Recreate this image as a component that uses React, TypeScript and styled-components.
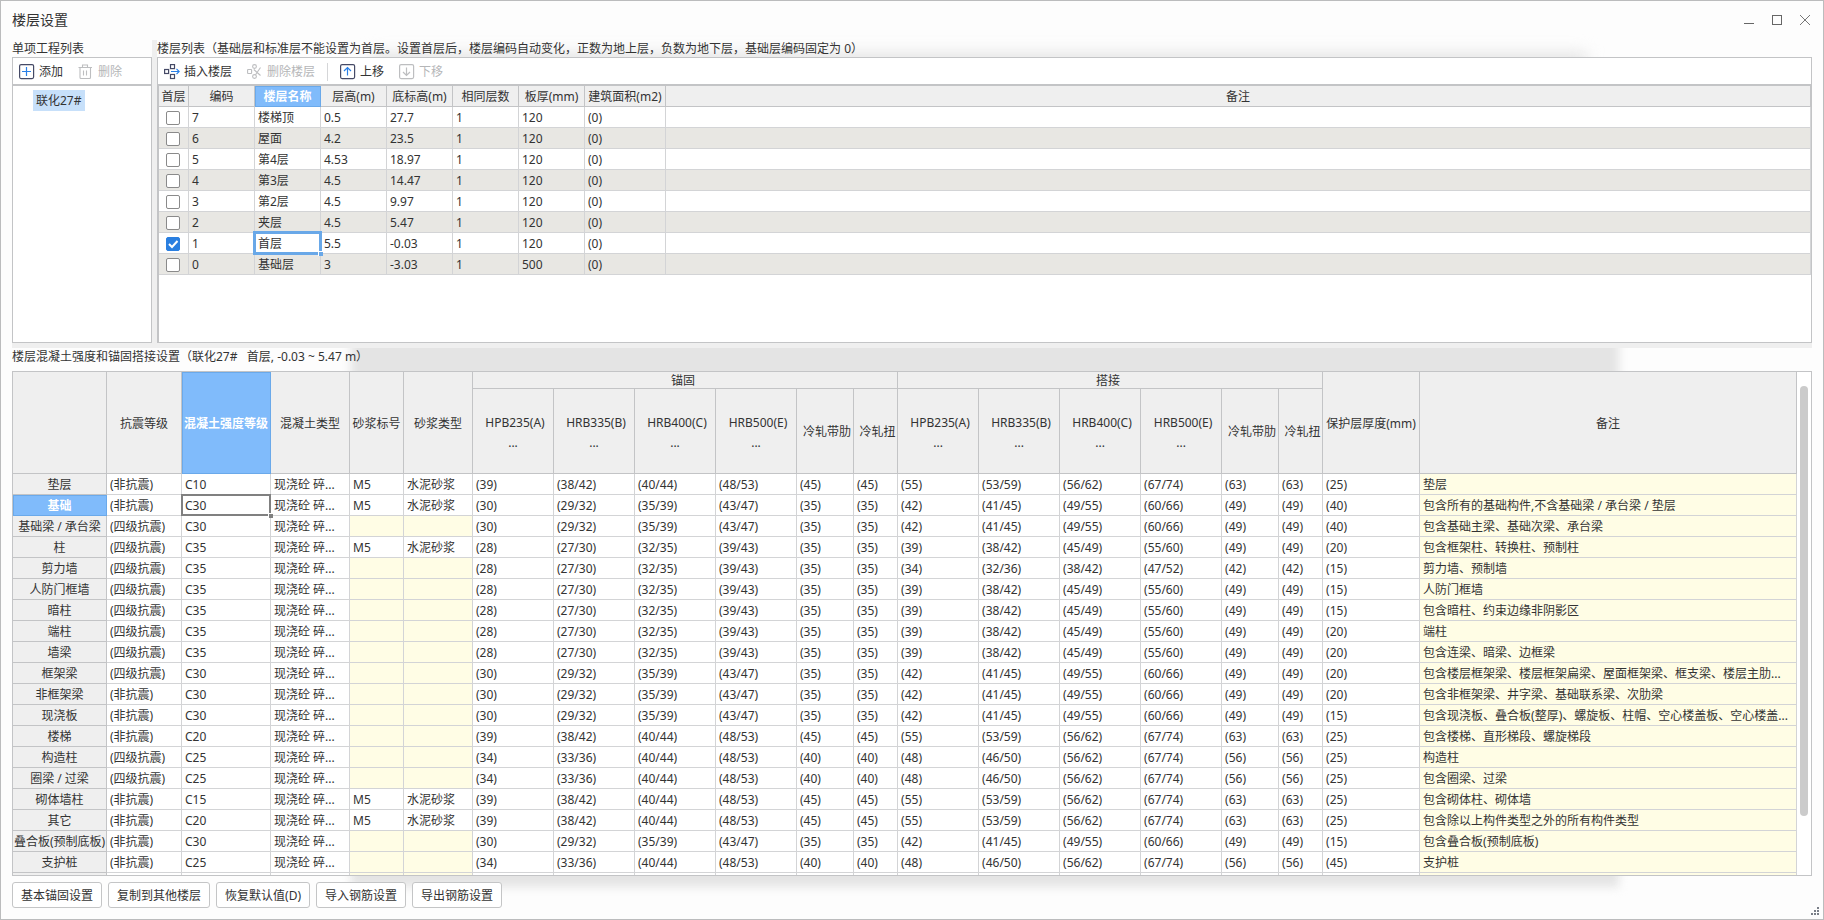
import React from "react";
import styled, { createGlobalStyle, css } from "styled-components";

const LINE = "#c3c4c6";
const GRID = "#d3d4d6";
const HEAD = "#efefef";
const BLUE = "#80bbfb";
const BLUE_EDGE = "#6aa9ea";

const Global = createGlobalStyle`
  *, *::before, *::after { box-sizing: border-box; }
  body {
    margin: 0;
    color: #333;
    background: #fdfdfd;
    font: 12px/20px "Noto Sans", "Noto Sans CJK SC", sans-serif;
  }
  button { font: inherit; color: inherit; cursor: pointer; }
`;

const Dialog = styled.main`
  position: relative;
  display: flex;
  flex-direction: column;
  height: 100vh;
  padding: 0 11px;
  border: 1px solid #bbbcbd;
  overflow: hidden;
  isolation: isolate;
`;

const Shade = styled.div<{ $top?: boolean }>`
  position: absolute;
  z-index: -1;
  inset: ${(p) => (p.$top ? "52px 236px 50% 370px" : "90px 204px 32px 350px")};
  background: #e4e4e4;
  filter: blur(${(p) => (p.$top ? 8 : 5)}px);
`;

const TitleBar = styled.header`
  display: flex;
  flex: none;
  align-items: center;
  justify-content: space-between;
  height: 39px;
  padding-bottom: 2px;
`;

const Title = styled.h1`
  margin: 0;
  font-size: 14px;
  font-weight: 400;
`;

const WindowControls = styled.div`
  display: flex;
  gap: 12px;
  margin-right: -1px;
`;

const WindowButton = styled.button`
  display: flex;
  padding: 0;
  border: 0;
  background: none;
`;

const Upper = styled.div`
  display: flex;
  flex: 303 1 0;
  min-height: 0;
`;

const Pane = styled.section<{ $narrow?: boolean }>`
  display: flex;
  flex-direction: column;
  ${(p) => (p.$narrow ? "flex: 0 0 140px;" : "flex: 1; min-width: 0;")}
`;

const Caption = styled.h2<{ $tall?: boolean }>`
  flex: none;
  height: ${(p) => (p.$tall ? 23 : 17)}px;
  margin: 0;
  font-size: 12px;
  font-weight: 400;
  line-height: 18px;
  white-space: pre;
`;

const VSplit = styled.div`
  flex: 0 0 5px;
  background: ${HEAD};
`;

const HSplit = styled.div`
  flex: 0 0 5px;
  background: ${HEAD};
`;

const Panel = styled.div`
  display: flex;
  flex: 1;
  flex-direction: column;
  min-height: 0;
  border: 1px solid ${LINE};
  background: #fff;
`;

const Toolbar = styled.div`
  display: flex;
  flex: none;
  align-items: center;
  gap: 15px;
  height: 27px;
  padding: 1px 6px 0;
  border-bottom: 1px solid ${LINE};
`;

const ToolButton = styled.button`
  display: flex;
  align-items: center;
  gap: 4px;
  padding: 0;
  border: 0;
  background: none;
  white-space: nowrap;
  &:disabled { color: #b5b6b8; cursor: default; }
  svg { flex: none; }
`;

const Divider = styled.span`
  width: 1px;
  height: 18px;
  margin: 0 -3px;
  background: #d5d6d8;
`;

const Tree = styled.ul`
  flex: 1;
  margin: 0;
  padding: 4px 20px;
  border-top: 1px solid ${LINE};
  list-style: none;
`;

const TreeItem = styled.li`
  width: max-content;
  padding: 1px 4px 0 3px;
  background: #c7e0fa;
`;

const GridFrame = styled.div`
  flex: 1;
  min-height: 0;
  border: solid ${LINE};
  border-width: 1px 0 0 1px;
  overflow: hidden;
`;

const Table = styled.table`
  width: 100%;
  border-collapse: separate;
  border-spacing: 0;
  table-layout: fixed;
  line-height: 18px;
`;

const HeadCell = styled.th<{ $active?: boolean; $h?: number; $indent?: boolean }>`
  height: ${(p) => p.$h ?? 21}px;
  padding: ${(p) => (p.$indent ? "2px 0 0 4px" : "2px 0 0")};
  border: 0 solid ${LINE};
  border-width: 0 1px 1px 0;
  background: ${HEAD};
  font-weight: 400;
  text-align: center;
  white-space: nowrap;
  ${(p) =>
    p.$active &&
    css`
      border-color: ${BLUE_EDGE};
      background: ${BLUE};
      box-shadow: inset 1px 1px ${BLUE_EDGE};
      color: #fff;
      font-weight: 700;
    `}
`;

const GroupHead = styled(HeadCell)`
  height: 17px;
  padding: 1px 4px 0 0;
  line-height: 15px;
`;

const BarName = styled.span`
  display: block;
  padding: 2px 0 0 4px;
  line-height: 20px;
`;

const Dots = styled.span`
  display: block;
  line-height: 20px;
`;

const Cell = styled.td<{ $tone?: "gray" | "yellow"; $focus?: "blue" | "gray" }>`
  position: relative;
  height: 21px;
  padding: 2px 3px 0;
  border: 0 solid ${GRID};
  border-width: 0 1px 1px 0;
  background: ${(p) => (p.$tone === "gray" ? "#e8e7e3" : p.$tone === "yellow" ? "#fffde5" : "#fff")};
  white-space: nowrap;
  overflow: hidden;
  text-overflow: ellipsis;
  ${(p) =>
    p.$focus &&
    css`
      z-index: 1;
      overflow: visible;
      &::before {
        content: "";
        position: absolute;
        inset: ${p.$focus === "blue" ? "-2px" : "-1px"};
        border: ${p.$focus === "blue" ? "3px solid #69a8e8" : "2px solid #808080"};
      }
      &::after {
        content: "";
        position: absolute;
        right: -3px;
        bottom: -3px;
        width: 5px;
        height: 5px;
        border: solid #fff;
        border-width: 1px 0 0 1px;
        background: ${p.$focus === "blue" ? "#69a8e8" : "#808080"};
      }
    `}
`;

const CheckLabel = styled.label`
  position: relative;
  display: block;
  width: 14px;
  margin: 0 4px;
  svg { position: absolute; left: 0; top: 0; pointer-events: none; }
`;

const Check = styled.input`
  display: block;
  appearance: none;
  width: 14px;
  height: 14px;
  margin: 0;
  border: 1px solid #8a8a8a;
  border-radius: 2px;
  background: #fff;
  &:checked {
    border-color: #2a7fe0;
    background: #2a7fe0;
  }
  &:not(:checked) + svg { display: none; }
`;

const Lower = styled.section`
  display: flex;
  flex: 528 1 0;
  flex-direction: column;
  min-height: 0;
`;

const LowerPanel = styled.div`
  display: flex;
  flex: 1;
  min-height: 0;
  border: 1px solid ${LINE};
  background: #fff;
`;

const Scroller = styled.div`
  flex: 1;
  min-width: 0;
  overflow-x: hidden;
  overflow-y: auto;
  scrollbar-width: none;
`;

const Track = styled.div`
  flex: 0 0 14px;
  padding: 14px 3px 0;
`;

const Thumb = styled.div`
  height: 88%;
  border-radius: 4px;
  background: #cbcbcb;
`;

const Footer = styled.footer`
  display: flex;
  flex: none;
  gap: 6px;
  padding: 6px 0 11px;
`;

const FooterButton = styled.button`
  height: 26px;
  padding: 1px 8px 0;
  border: 1px solid #c4c5c6;
  border-radius: 3px;
  background: #fff;
  white-space: nowrap;
`;

const Grip = styled.svg`
  position: absolute;
  right: 3px;
  bottom: 3px;
`;

const NAVY = "#454a66";
const ACCENT = "#2a80e8";
const OFF = "#bdbec0";

const AddIcon = () => (
  <svg width="16" height="16" viewBox="0 0 16 16" fill="none">
    <rect x="0.6" y="0.6" width="14" height="14" rx="1.5" stroke={NAVY} strokeWidth="1.2" />
    <path d="M7.5 3v9M3 7.5h9" stroke={ACCENT} strokeWidth="1.2" />
  </svg>
);

const TrashIcon = () => (
  <svg width="16" height="16" viewBox="0 0 16 16" fill="none" stroke={OFF} strokeWidth="1.1">
    <path d="M0.5 3.5h13.500M4.500 3.5v-2.500h5v2.500M2 3.5v10a1 1 0 0 0 1 1h8.500a1 1 0 0 0 1-1V3.500M5.500 6.500v5M8.500 6.500v5" />
  </svg>
);

const InsertIcon = () => (
  <svg width="16" height="16" viewBox="0 0 16 16" fill="none" stroke={NAVY} strokeWidth="1.2">
    <rect x="0.6" y="5.500" width="4" height="4" />
    <rect x="6.500" y="0.6" width="4" height="4" />
    <rect x="6.500" y="10.500" width="4" height="4" />
    <path d="M7 7.500h8.500M12.500 4.800l2.700 2.700-2.700 2.700" stroke={ACCENT} />
  </svg>
);

const RemoveFloorIcon = () => (
  <svg width="16" height="16" viewBox="0 0 16 16" fill="none" stroke={OFF} strokeWidth="1.1">
    <rect x="0.6" y="5.500" width="4" height="4" rx="0.5" />
    <circle cx="7.500" cy="2.500" r="1.900" />
    <circle cx="7.500" cy="12.500" r="1.900" />
    <path d="M13.500 3.500l-5 7.200M6.800 5.500l6.700 6" />
  </svg>
);

const ArrowIcon = ({ down }: { down?: boolean }) => (
  <svg width="16" height="16" viewBox="0 0 16 16" fill="none" strokeWidth="1.2">
    <rect x="0.6" y="0.6" width="14" height="14" rx="1.500" stroke={down ? OFF : NAVY} />
    <path
      d={down ? "M7.500 3.500v8M4 8l3.500 3.500L11 8" : "M7.500 11.500v-8M4 7l3.500-3.500L11 7"}
      stroke={down ? OFF : ACCENT}
    />
  </svg>
);

const floors = [
  ["7", "楼梯顶", "0.5", "27.7", "1", "120", "(0)"],
  ["6", "屋面", "4.2", "23.5", "1", "120", "(0)"],
  ["5", "第4层", "4.53", "18.97", "1", "120", "(0)"],
  ["4", "第3层", "4.5", "14.47", "1", "120", "(0)"],
  ["3", "第2层", "4.5", "9.97", "1", "120", "(0)"],
  ["2", "夹层", "4.5", "5.47", "1", "120", "(0)"],
  ["1", "首层", "5.5", "-0.03", "1", "120", "(0)"],
  ["0", "基础层", "3", "-3.03", "1", "500", "(0)"],
];

const floorHeads = ["首层", "编码", "楼层名称", "层高(m)", "底标高(m)", "相同层数", "板厚(mm)", "建筑面积(m2)", "备注"];
const floorWidths = [30, 66, 66, 66, 66, 66, 66, 81];

const memberWidths = [94, 75, 89, 79, 54, 69, 81, 81, 81, 81, 57, 44, 81, 81, 81, 81, 57, 44, 97];
const barNames = ["HPB235(A)", "HRB335(B)", "HRB400(C)", "HRB500(E)"];

// Anchorage and lap lengths, shared by the members of one concrete grade.
const lengths: Record<string, string> = {
  low: "39 38/42 40/44 48/53 45 45 55 53/59 56/62 67/74 63 63",
  c25: "34 33/36 40/44 48/53 40 40 48 46/50 56/62 67/74 56 56",
  c30: "30 29/32 35/39 43/47 35 35 42 41/45 49/55 60/66 49 49",
  c35: "28 27/30 32/35 39/43 35 35 39 38/42 45/49 55/60 49 49",
  wall: "28 27/30 32/35 39/43 35 35 34 32/36 38/42 47/52 42 42",
};

type Member = [name: string, seismic: boolean, grade: string, mortar: boolean, lengths: string, cover: number, note: string];

const members: Member[] = [
  ["垫层", false, "C10", true, "low", 25, "垫层"],
  ["基础", false, "C30", true, "c30", 40, "包含所有的基础构件,不含基础梁 / 承台梁 / 垫层"],
  ["基础梁 / 承台梁", true, "C30", false, "c30", 40, "包含基础主梁、基础次梁、承台梁"],
  ["柱", true, "C35", true, "c35", 20, "包含框架柱、转换柱、预制柱"],
  ["剪力墙", true, "C35", false, "wall", 15, "剪力墙、预制墙"],
  ["人防门框墙", true, "C35", false, "c35", 15, "人防门框墙"],
  ["暗柱", true, "C35", false, "c35", 15, "包含暗柱、约束边缘非阴影区"],
  ["端柱", true, "C35", false, "c35", 20, "端柱"],
  ["墙梁", true, "C35", false, "c35", 20, "包含连梁、暗梁、边框梁"],
  ["框架梁", true, "C30", false, "c30", 20, "包含楼层框架梁、楼层框架扁梁、屋面框架梁、框支梁、楼层主肋..."],
  ["非框架梁", false, "C30", false, "c30", 20, "包含非框架梁、井字梁、基础联系梁、次肋梁"],
  ["现浇板", false, "C30", false, "c30", 15, "包含现浇板、叠合板(整厚)、螺旋板、柱帽、空心楼盖板、空心楼盖..."],
  ["楼梯", false, "C20", false, "low", 25, "包含楼梯、直形梯段、螺旋梯段"],
  ["构造柱", true, "C25", false, "c25", 25, "构造柱"],
  ["圈梁 / 过梁", true, "C25", false, "c25", 25, "包含圈梁、过梁"],
  ["砌体墙柱", false, "C15", true, "low", 25, "包含砌体柱、砌体墙"],
  ["其它", false, "C20", true, "low", 25, "包含除以上构件类型之外的所有构件类型"],
  ["叠合板(预制底板)", false, "C30", false, "c30", 15, "包含叠合板(预制底板)"],
  ["支护桩", false, "C25", false, "c25", 45, "支护桩"],
];

function FloorTable() {
  return (
    <Table>
      <colgroup>
        {floorWidths.map((w, i) => <col key={i} width={w} />)}
        <col />
      </colgroup>
      <thead>
        <tr>
          {floorHeads.map((h) => <HeadCell key={h} scope="col" $active={h === "楼层名称"}>{h}</HeadCell>)}
        </tr>
      </thead>
      <tbody>
        {floors.map((row, r) => {
          const tone = r % 2 ? "gray" : undefined;
          const first = row[0] === "1";
          return (
            <tr key={row[0]}>
              <Cell $tone={tone}>
                <CheckLabel>
                  <Check type="checkbox" defaultChecked={first} aria-label={`${row[1]} 首层`} />
                  <svg width="14" height="14" viewBox="0 0 14 14" fill="none" stroke="#fff" strokeWidth="2">
                    <path d="M3 7l3 3 5.500-6" />
                  </svg>
                </CheckLabel>
              </Cell>
              {row.map((v, c) => (
                <Cell key={c} $tone={tone} $focus={first && c === 1 ? "blue" : undefined}>{v}</Cell>
              ))}
              <Cell $tone={tone} />
            </tr>
          );
        })}
      </tbody>
    </Table>
  );
}

function BarHeads() {
  return (
    <>
      {barNames.map((n) => (
        <HeadCell key={n} scope="col" $h={85}>
          <BarName>{n}</BarName>
          <Dots>...</Dots>
        </HeadCell>
      ))}
      <HeadCell scope="col" $h={85} $indent>冷轧带肋</HeadCell>
      <HeadCell scope="col" $h={85} $indent>冷轧扭</HeadCell>
    </>
  );
}

function MemberTable() {
  return (
    <Table>
      <colgroup>
        {memberWidths.map((w, i) => <col key={i} width={w} />)}
        <col />
      </colgroup>
      <thead>
        <tr>
          <HeadCell rowSpan={2} />
          <HeadCell rowSpan={2} scope="col">抗震等级</HeadCell>
          <HeadCell rowSpan={2} scope="col" $active>混凝土强度等级</HeadCell>
          <HeadCell rowSpan={2} scope="col">混凝土类型</HeadCell>
          <HeadCell rowSpan={2} scope="col">砂浆标号</HeadCell>
          <HeadCell rowSpan={2} scope="col">砂浆类型</HeadCell>
          <GroupHead colSpan={6} scope="colgroup">锚固</GroupHead>
          <GroupHead colSpan={6} scope="colgroup">搭接</GroupHead>
          <HeadCell rowSpan={2} scope="col">保护层厚度(mm)</HeadCell>
          <HeadCell rowSpan={2} scope="col">备注</HeadCell>
        </tr>
        <tr>
          <BarHeads />
          <BarHeads />
        </tr>
      </thead>
      <tbody>
        {members.map(([name, seismic, grade, mortar, key, cover, note]) => (
          <tr key={name}>
            <HeadCell scope="row" $active={name === "基础"}>{name}</HeadCell>
            <Cell>{seismic ? "(四级抗震)" : "(非抗震)"}</Cell>
            <Cell $focus={name === "基础" ? "gray" : undefined}>{grade}</Cell>
            <Cell>现浇砼 碎...</Cell>
            <Cell $tone={mortar ? undefined : "yellow"}>{mortar ? "M5" : ""}</Cell>
            <Cell $tone={mortar ? undefined : "yellow"}>{mortar ? "水泥砂浆" : ""}</Cell>
            {lengths[key].split(" ").map((v, i) => <Cell key={i}>({v})</Cell>)}
            <Cell>({cover})</Cell>
            <Cell $tone="yellow">{note}</Cell>
          </tr>
        ))}
        <tr>
          <HeadCell scope="row" />
          {memberWidths.slice(1).map((_, i) => (
            <Cell key={i} $tone={i === 3 || i === 4 ? "yellow" : undefined} />
          ))}
          <Cell $tone="yellow" />
        </tr>
      </tbody>
    </Table>
  );
}

export default function App() {
  return (
    <>
      <Global />
      <Dialog>
        <Shade $top />
        <Shade />
        <TitleBar>
          <Title>楼层设置</Title>
          <WindowControls>
            <WindowButton aria-label="最小化">
              <svg width="16" height="16" fill="none" stroke="#666"><path d="M3 11.500h10" /></svg>
            </WindowButton>
            <WindowButton aria-label="最大化">
              <svg width="16" height="16" fill="none" stroke="#666"><rect x="3.500" y="3.500" width="9" height="9" /></svg>
            </WindowButton>
            <WindowButton aria-label="关闭">
              <svg width="16" height="16" fill="none" stroke="#777"><path d="M3 3l10 10M13 3L3 13" /></svg>
            </WindowButton>
          </WindowControls>
        </TitleBar>

        <Upper>
          <Pane $narrow>
            <Caption>单项工程列表</Caption>
            <Panel>
              <Toolbar>
                <ToolButton><AddIcon />添加</ToolButton>
                <ToolButton disabled><TrashIcon />删除</ToolButton>
              </Toolbar>
              <Tree>
                <TreeItem>联化27#</TreeItem>
              </Tree>
            </Panel>
          </Pane>
          <VSplit />
          <Pane>
            <Caption>楼层列表（基础层和标准层不能设置为首层。设置首层后，楼层编码自动变化，正数为地上层，负数为地下层，基础层编码固定为 0）</Caption>
            <Panel>
              <Toolbar>
                <ToolButton><InsertIcon />插入楼层</ToolButton>
                <ToolButton disabled><RemoveFloorIcon />删除楼层</ToolButton>
                <Divider />
                <ToolButton><ArrowIcon />上移</ToolButton>
                <ToolButton disabled><ArrowIcon down />下移</ToolButton>
              </Toolbar>
              <GridFrame>
                <FloorTable />
              </GridFrame>
            </Panel>
          </Pane>
        </Upper>
        <HSplit />

        <Lower>
          <Caption $tall>楼层混凝土强度和锚固搭接设置（联化27#   首层, -0.03 ~ 5.47 m）</Caption>
          <LowerPanel>
            <Scroller>
              <MemberTable />
            </Scroller>
            <Track><Thumb /></Track>
          </LowerPanel>
        </Lower>

        <Footer>
          <FooterButton>基本锚固设置</FooterButton>
          <FooterButton>复制到其他楼层</FooterButton>
          <FooterButton>恢复默认值(D)</FooterButton>
          <FooterButton>导入钢筋设置</FooterButton>
          <FooterButton>导出钢筋设置</FooterButton>
        </Footer>
        <Grip width="9" height="9" fill="#7a7f88">
          <path d="M6 0h2v2h-2zM3 3h2v2h-2zM6 3h2v2h-2zM0 6h2v2h-2zM3 6h2v2h-2zM6 6h2v2h-2z" />
        </Grip>
      </Dialog>
    </>
  );
}
